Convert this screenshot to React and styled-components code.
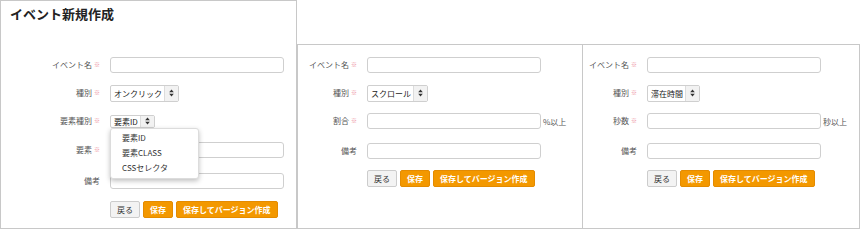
import styled, { createGlobalStyle } from "styled-components";

const GlobalStyle = createGlobalStyle`
  * {
    box-sizing: border-box;
  }

  body {
    margin: 0;
    background: #fff;
    font-family: "Noto Sans CJK JP", "Noto Sans", sans-serif;
    color: #333;
  }
`;

function Arrows() {
  return (
    <svg width="5" height="8" viewBox="0 0 5 8">
      <path d="M2.5 0.5 L4.8 3.2 L0.2 3.2 Z" fill="#333" />
      <path d="M2.5 7.5 L4.8 4.8 L0.2 4.8 Z" fill="#333" />
    </svg>
  );
}

function Field({ label, required, extra, children }) {
  return (
    <Row $extra={extra}>
      <Label>
        {label}
        {required && <Required>※</Required>}
      </Label>
      {children}
    </Row>
  );
}

function SelectBox({ value, compact }) {
  return (
    <Select $compact={compact}>
      <SelectValue>{value}</SelectValue>
      <SelectArrow>
        <Arrows />
      </SelectArrow>
    </Select>
  );
}

function Actions({ extra }) {
  return (
    <Row $extra={extra}>
      <Label />
      <Buttons>
        <Button>戻る</Button>
        <Button $primary>保存</Button>
        <Button $primary>保存してバージョン作成</Button>
      </Buttons>
    </Row>
  );
}

function App() {
  return (
    <>
      <GlobalStyle />
      <Page>
        <Panel $width={297} $height={229} $labelWidth={99}>
          <Title>イベント新規作成</Title>
          <Form $top={35}>
            <Field label="イベント名" required>
              <TextInput />
            </Field>
            <Field label="種別" required>
              <SelectBox value="オンクリック" />
            </Field>
            <Field label="要素種別" required>
              <SelectWrap>
                <SelectBox value="要素ID" compact />
                <Menu>
                  <MenuItem>要素ID</MenuItem>
                  <MenuItem>要素CLASS</MenuItem>
                  <MenuItem>CSSセレクタ</MenuItem>
                </Menu>
              </SelectWrap>
            </Field>
            <Field label="要素" required extra={1}>
              <TextInput />
            </Field>
            <Field label="備考" extra={3}>
              <TextInput />
            </Field>
            <Actions />
          </Form>
        </Panel>

        <Panel $width={286} $height={185} $labelWidth={59}>
          <Form $top={12}>
            <Field label="イベント名" required>
              <TextInput />
            </Field>
            <Field label="種別" required>
              <SelectBox value="スクロール" />
            </Field>
            <Field label="割合" required>
              <TextInput />
              <Unit>%以上</Unit>
            </Field>
            <Field label="備考" extra={2}>
              <TextInput />
            </Field>
            <Actions extra={-1} />
          </Form>
        </Panel>

        <Panel $width={278} $height={185} $labelWidth={54} $overlap>
          <Form $top={12}>
            <Field label="イベント名" required>
              <TextInput />
            </Field>
            <Field label="種別" required>
              <SelectBox value="滞在時間" />
            </Field>
            <Field label="秒数" required>
              <TextInput />
              <Unit>秒以上</Unit>
            </Field>
            <Field label="備考" extra={2}>
              <TextInput />
            </Field>
            <Actions extra={-1} />
          </Form>
        </Panel>
      </Page>
    </>
  );
}

export default App;

const Page = styled.div`
  display: flex;
  align-items: flex-end;
  width: 860px;
  height: 229px;
`;

const Panel = styled.section`
  --label-width: ${(p) => p.$labelWidth}px;
  flex: none;
  width: ${(p) => p.$width}px;
  height: ${(p) => p.$height}px;
  margin-left: ${(p) => (p.$overlap ? "-1px" : "0")};
  border: 1px solid #c8c8c8;
  background: #fff;
`;

const Title = styled.h1`
  margin: 0;
  padding: 5px 9px 0;
  font-size: 13px;
  line-height: 16px;
  font-weight: 700;
  color: #222;
`;

const Form = styled.div`
  display: flex;
  flex-direction: column;
  gap: 12px;
  padding-top: ${(p) => p.$top}px;
`;

const Row = styled.div`
  display: flex;
  align-items: center;
  gap: 10px;
  height: 16px;
  margin-top: ${(p) => p.$extra || 0}px;
`;

const Label = styled.div`
  flex: none;
  display: flex;
  justify-content: flex-end;
  align-items: center;
  gap: 2px;
  width: var(--label-width);
  font-size: 8px;
  line-height: 1;
  color: #555;
`;

const Required = styled.span`
  font-size: 6px;
  color: #ec8a97;
`;

const TextInput = styled.input`
  flex: none;
  width: 174px;
  height: 16px;
  margin: 0;
  padding: 0 4px;
  border: 1px solid #cfcfcf;
  border-radius: 3px;
  background: #fff;
  font: inherit;
  font-size: 8px;
`;

const Unit = styled.span`
  margin-left: -8px;
  font-size: 8px;
  color: #555;
`;

const SelectWrap = styled.div`
  position: relative;
  display: flex;
`;

const Select = styled.div`
  display: flex;
  align-items: stretch;
  height: ${(p) => (p.$compact ? "13px" : "17px")};
  border: 1px solid #cfcfcf;
  border-radius: 2px;
  background: #fff;
  font-size: 8px;
  color: #222;
`;

const SelectValue = styled.span`
  display: flex;
  align-items: center;
  padding: 0 2px 0 3px;
  white-space: nowrap;
`;

const SelectArrow = styled.span`
  display: flex;
  align-items: center;
  justify-content: center;
  width: 14px;
  border-left: 1px solid #dcdcdc;
  background: #f2f2f2;
`;

const Menu = styled.div`
  position: absolute;
  top: 100%;
  left: 0;
  z-index: 2;
  width: 89px;
  padding: 1px 0 3px;
  border: 1px solid #dcdcdc;
  border-radius: 3px;
  background: #fff;
  box-shadow: 0 2px 5px rgba(0, 0, 0, 0.25);
`;

const MenuItem = styled.div`
  padding-left: 11px;
  font-size: 8px;
  line-height: 15px;
  color: #333;
  white-space: nowrap;
`;

const Buttons = styled.div`
  display: flex;
  gap: 3px;
  height: 17px;
`;

const Button = styled.button`
  display: flex;
  align-items: center;
  margin: 0;
  padding: 0 6px;
  border: 1px solid ${(p) => (p.$primary ? "#e48b00" : "#cccccc")};
  border-radius: 2px;
  background: ${(p) => (p.$primary ? "#f39800" : "#f3f3f3")};
  color: ${(p) => (p.$primary ? "#fff" : "#333")};
  font: inherit;
  font-size: 8px;
  font-weight: ${(p) => (p.$primary ? 700 : 400)};
  white-space: nowrap;
  cursor: pointer;
`;
